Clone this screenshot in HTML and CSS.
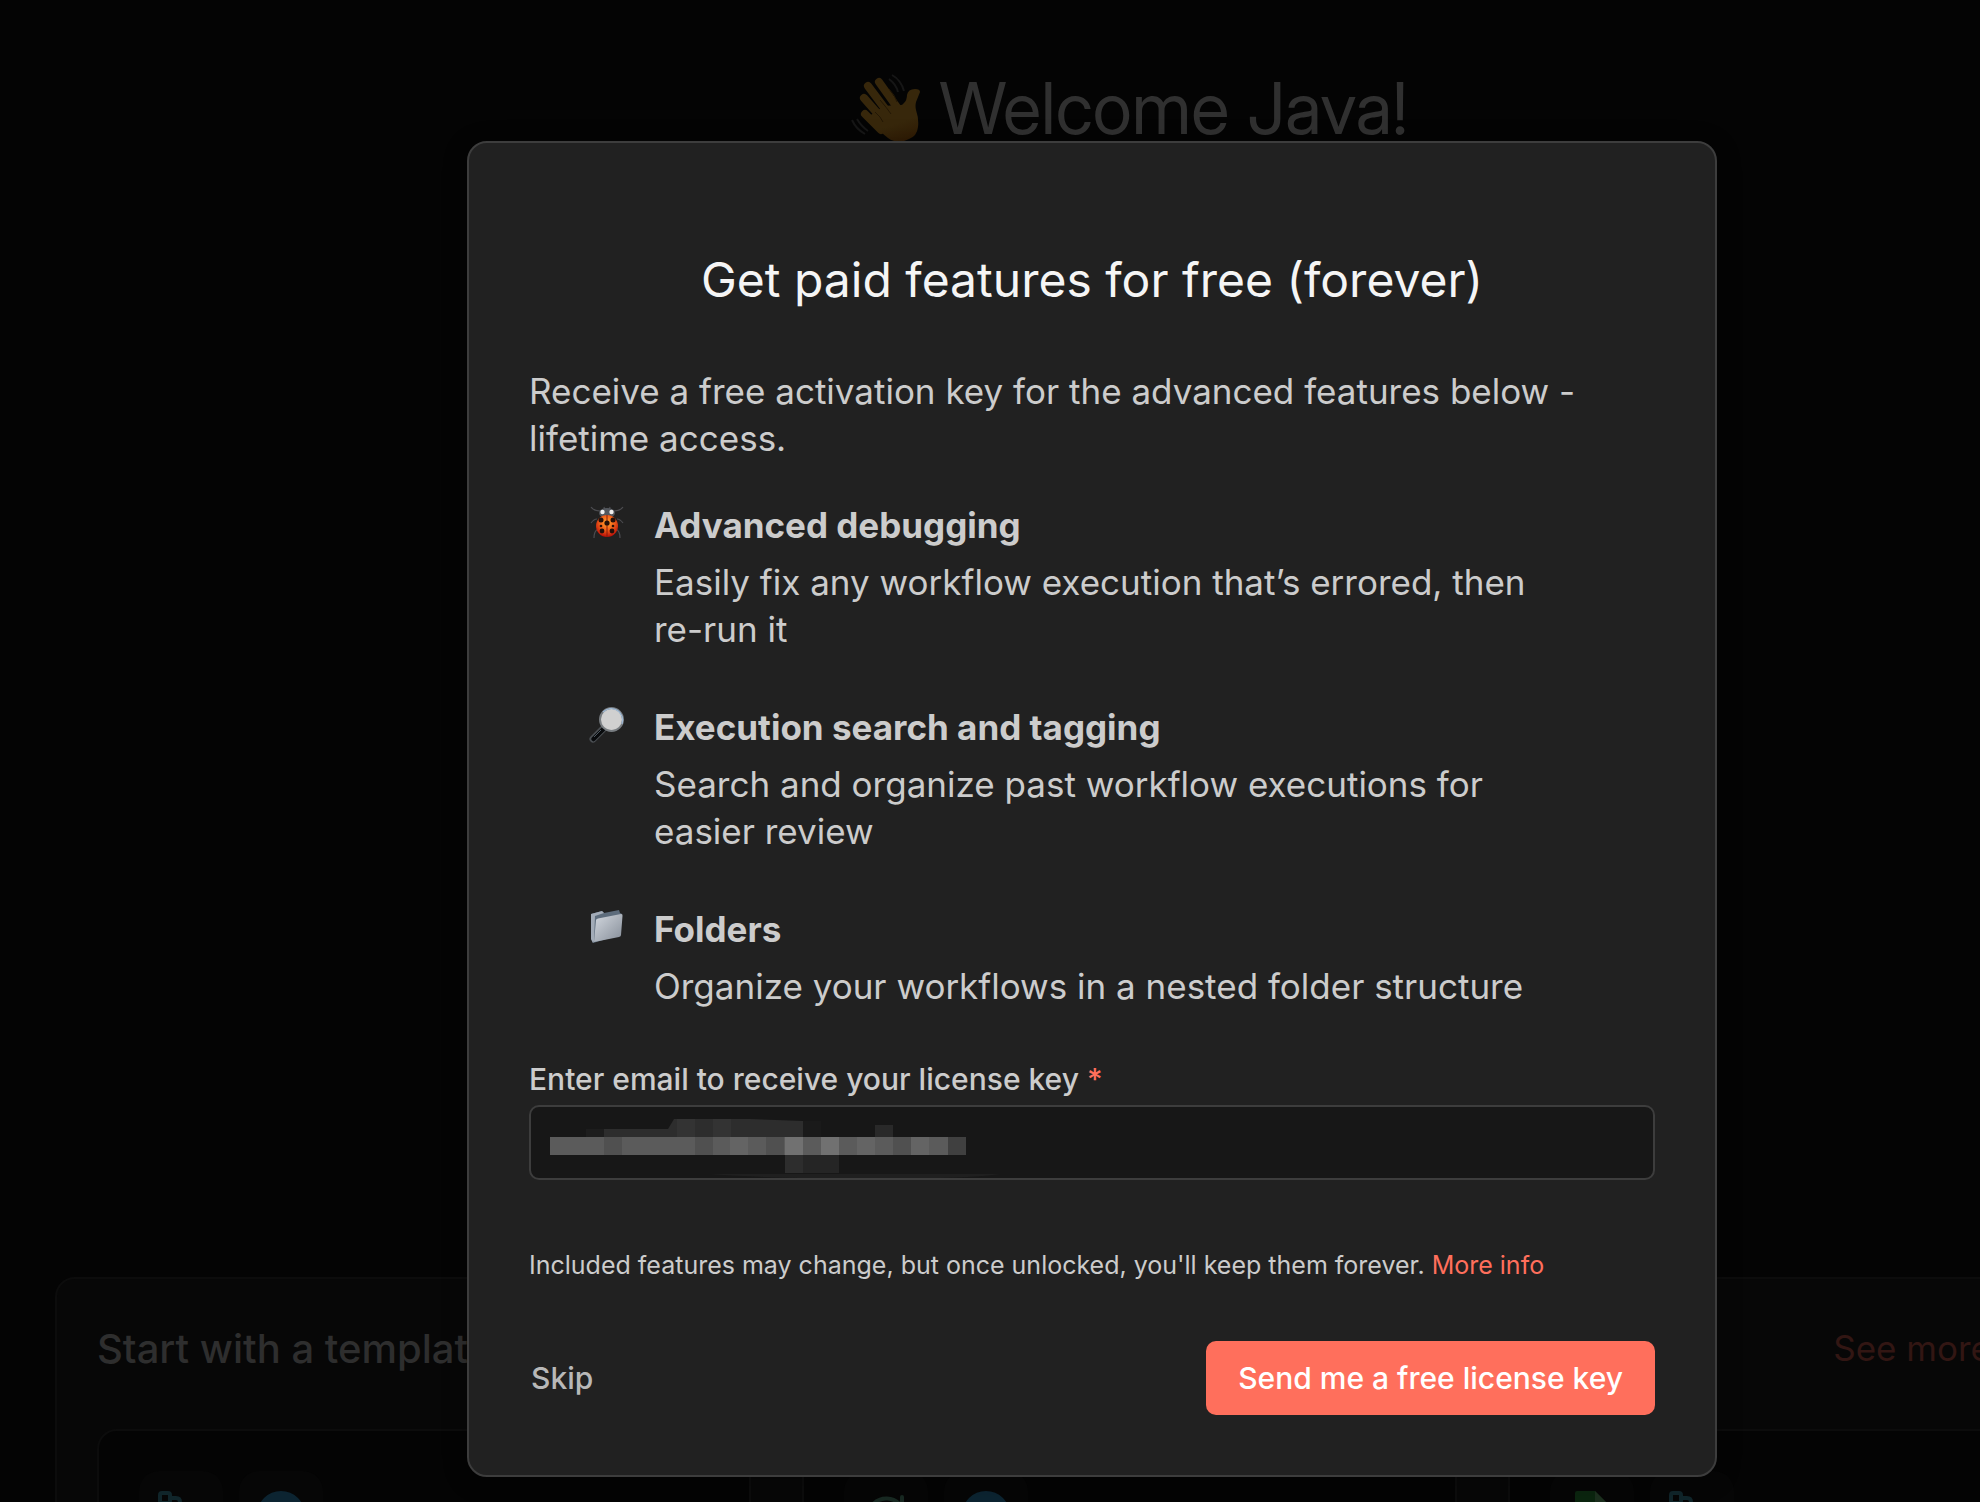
FILE: index.html
```html
<!DOCTYPE html>
<html lang="en">
<head>
<meta charset="utf-8">
<meta name="viewport" content="width=device-width, initial-scale=1">
<title>Get paid features for free</title>
<link rel="stylesheet" href="styles.css">
</head>
<body>
<svg class="defs" aria-hidden="true">
  <defs>
    <symbol id="nodes" viewBox="0 0 48 48">
      <g fill="none" stroke="#10252a" stroke-width="4">
        <rect x="3" y="2" width="10" height="10" rx="2"/>
        <path d="M13 7h6q4 0 4 4v26q0 4-4 4h-6M23 24h12"/>
        <rect x="3" y="36" width="10" height="10" rx="2"/>
        <rect x="35" y="19" width="10" height="10" rx="2"/>
      </g>
    </symbol>
    <symbol id="disc" viewBox="0 0 48 48">
      <circle cx="24" cy="24" r="24" fill="#0c2431"/>
    </symbol>
    <symbol id="refresh" viewBox="0 0 48 48">
      <path d="M39 15A18 18 0 1 0 42 29M40 6v11H29" fill="none" stroke="#182922" stroke-width="4" stroke-linecap="round"/>
    </symbol>
    <symbol id="sheet" viewBox="0 0 48 48">
      <path d="M7 2q0-2 2-2h18l14 14v32q0 2-2 2H9q-2 0-2-2z" fill="#0b250f"/>
      <path d="M27 0l14 14H27z" fill="#1c2f1e"/>
    </symbol>
  </defs>
</svg>

<main class="page">
  <h1 class="welcome">
    <svg class="wave" viewBox="10 10 72 72" aria-hidden="true">
      <defs>
        <linearGradient id="skin" gradientUnits="userSpaceOnUse" x1="40" y1="20" x2="60" y2="80">
          <stop offset="0" stop-color="#37270b"/>
          <stop offset="0.7" stop-color="#37270b"/>
          <stop offset="1" stop-color="#2f1b04"/>
        </linearGradient>
      </defs>
      <g stroke="url(#skin)" stroke-width="8" stroke-linecap="round">
        <path d="M38 20l20 28M27 24l24 32M23 36l22 25M24 52l16 16"/>
      </g>
      <path d="M43 44l14-1q4 1 6-2 3-3 3-8 1-6 8-6 5 0 5 3l-4 10q-1 4 0 8 3 9 2 17-1 9-9 12-11 6-21-1L24 57z" fill="url(#skin)"/>
      <path d="M48 27q6 6 8 13M39 38q7 8 11 14M34 50q6 5 8 10" fill="none" stroke="#231705"/>
      <path d="M51 13q9 5 12 16M48 17q7 5 9 13M16 57q4 7 11 12M11 58q4 9 13 14" fill="none" stroke="#161616" stroke-width="2"/>
    </svg>
    Welcome Java!
  </h1>
  <section class="templates">
    <header class="templates-head">
      <h2>Start with a template</h2>
      <a href="#">See more</a>
    </header>
    <div class="cards">
      <article class="card">
        <span class="tile"><svg><use href="#nodes"/></svg></span>
        <span class="tile"><svg><use href="#disc"/></svg></span>
      </article>
      <article class="card">
        <span class="tile"><svg><use href="#refresh"/></svg></span>
        <span class="tile"><svg><use href="#disc"/></svg></span>
      </article>
      <article class="card">
        <span class="tile"><svg><use href="#sheet"/></svg></span>
        <span class="tile"><svg><use href="#nodes"/></svg></span>
      </article>
    </div>
  </section>
</main>

<div class="overlay">
  <form class="modal" role="dialog" aria-labelledby="dialog-title">
    <h2 class="title" id="dialog-title">Get paid features for free (forever)</h2>
    <p class="intro">Receive a free activation key for the advanced features below - lifetime access.</p>
    <ul class="features">
      <li>
        <svg class="emoji" viewBox="0 0 36 36" aria-hidden="true">
          <defs>
            <radialGradient id="shell" cx="0.5" cy="0.35" r="0.65">
              <stop offset="0" stop-color="#ffa62b"/>
              <stop offset="0.5" stop-color="#f0601a"/>
              <stop offset="1" stop-color="#b80d08"/>
            </radialGradient>
          </defs>
          <path d="M2 2q3 4 9 4M34 2q-3 4-9 4M2 18q3-4 6-4M34 18q-3-4-6-4M5 33q0-7 4-9M31 33q0-7-4-9M15 2l1 4M21 2l-1 4" fill="none" stroke="#4c4c50" stroke-width="1.2"/>
          <ellipse cx="18" cy="8" rx="8" ry="5" fill="#53575d"/>
          <circle cx="13.500" cy="7" r="2.200" fill="#eee"/><circle cx="22.500" cy="7" r="2.200" fill="#eee"/>
          <ellipse cx="18" cy="21" rx="11" ry="11" fill="url(#shell)"/>
          <path d="M18 10v22" stroke="#8a1a08"/>
          <g fill="#24100a"><circle cx="18" cy="18" r="2.600"/><circle cx="12" cy="15" r="2.500"/><circle cx="24" cy="15" r="2.500"/><circle cx="12" cy="21" r="1.300"/><circle cx="24" cy="21" r="1.300"/><circle cx="13" cy="26" r="2.400"/><circle cx="23" cy="26" r="2.400"/></g>
        </svg>
        <div>
          <h3>Advanced debugging</h3>
          <p>Easily fix any workflow execution that’s errored, then re-run it</p>
        </div>
      </li>
      <li>
        <svg class="emoji" viewBox="0 0 36 36" aria-hidden="true">
          <path d="M15 21L4 32" stroke="#4a4e52" stroke-width="7" stroke-linecap="round"/>
          <path d="M14 22.500L4.500 32" stroke="#080a0c" stroke-width="4.500" stroke-linecap="round"/>
          <path d="M12 23L5 30" stroke="#4c5760" stroke-width="1"/>
          <circle cx="22.500" cy="12.500" r="11.500" fill="#c9c9c9" stroke="#777c80" stroke-width="2"/>
          <path d="M14 5a11.500 11.500 0 0 1 19 12" fill="none" stroke="#9fb9d4" stroke-width="1.300"/>
          <circle cx="22.500" cy="12.500" r="10" fill="#d0d0d0"/>
        </svg>
        <div>
          <h3>Execution search and tagging</h3>
          <p>Search and organize past workflow executions for easier review</p>
        </div>
      </li>
      <li>
        <svg class="emoji" viewBox="0 0 36 36" aria-hidden="true">
          <defs>
            <linearGradient id="folder" x1="0" y1="0" x2="1" y2="1">
              <stop offset="0" stop-color="#d3d8df"/>
              <stop offset="1" stop-color="#858d98"/>
            </linearGradient>
          </defs>
          <path d="M2 5l11-3 2 2 15-3 1 3 2 1-2 21L4 34 2 30z" fill="#5d6c7c"/>
          <path d="M2 5l11-3 2 2-9 3-1 25-1 2-2-4z" fill="#a2abb7"/>
          <path d="M7 11q0-1 2-1.500L32 5q2 0 1.500 2L32 26q0 1.500-2 2L5 33z" fill="url(#folder)"/>
        </svg>
        <div>
          <h3>Folders</h3>
          <p>Organize your workflows in a nested folder structure</p>
        </div>
      </li>
    </ul>
    <label class="label" for="email">Enter email to receive your license key <span class="star">*</span></label>
    <div class="field">
      <input id="email" type="email" required>
      <svg class="redacted" viewBox="0 0 480 75" aria-hidden="true">
        <g fill="#2d2d2d">
          <path d="M36 24h18v9H36z" fill="#1d1d1d"/>
          <path d="M54 24h64l6-10h75l54 2v17H54z"/>
          <path d="M163 14h18v19h-18zM127 14h18v19h-18z" fill="#333"/>
          <path d="M253 16h18v17h-18z" fill="#1a1a1a"/>
          <path d="M325 20h18v13h-18z" fill="#292929"/>
          <path d="M235 50h18v18h-18z"/>
          <path d="M253 50h36v18h-36z" fill="#252525"/>
        </g>
        <path d="M0 32h416v18H0z" fill="#5b5b5b"/>
        <path d="M54 32h18v18H54zM145 32h18v18h-18zM216 32h18v18h-18zM343 32h18v18h-18z" fill="#505050"/>
        <path d="M180 32h18v18h-18zM307 32h18v18h-18zM361 32h18v18h-18z" fill="#646464"/>
        <path d="M235 32h18v18h-18zM271 32h18v18h-18z" fill="#717171"/>
        <path d="M398 32h18v18h-18z" fill="#404040"/>
        <path d="M160 69h290q-20 3-60 4H250q-50-1-90-4z" fill="#1f1f1f"/>
      </svg>
    </div>
    <p class="note">Included features may change, but once unlocked, you'll keep them forever. <a href="#">More info</a></p>
    <div class="actions">
      <button class="skip" type="button">Skip</button>
      <button class="send" type="submit">Send me a free license key</button>
    </div>
  </form>
</div>
</body>
</html>
```
FILE: styles.css
```css
* {
  box-sizing: border-box;
  margin: 0;
  padding: 0;
}

body {
  background: #040404;
  color: #cccccc;
  font-family: Inter, sans-serif;
  font-size: 35px;
  line-height: 47px;
}

a {
  color: #ff6f5c;
  text-decoration: none;
}

.defs {
  display: block;
  width: 0;
  height: 0;
}

/* The workspace runs wider than the window, past its right edge. */
.page {
  display: flex;
  flex-direction: column;
  justify-content: space-between;
  height: 100vh;
  overflow: hidden;
  padding: 66px 0 0 55px;
}

.welcome {
  display: flex;
  align-items: center;
  justify-content: center;
  gap: 16px;
  margin-right: -224px;
  color: #303030;
  font-family: "Inter Display", Inter, sans-serif;
  font-size: 71px;
  font-weight: 400;
  line-height: 84px;
}

.wave {
  width: 72px;
  height: 72px;
}

.templates {
  height: 266px;
  margin: 0 -224px -41px 0;
  padding: 40px 40px 0;
  border: 2px solid #0c0c0c;
  border-radius: 20px;
  background: #070707;
}

.templates-head {
  display: flex;
  align-items: center;
  justify-content: space-between;
  height: 58px;
  margin-bottom: 52px;
  padding-right: 171px;
}

.templates-head h2 {
  color: #2e2e2e;
  font-size: 40px;
  font-weight: 500;
}

.templates-head a {
  color: #321613;
}

.cards {
  display: grid;
  grid-template-columns: repeat(3, 1fr);
  gap: 51px;
}

.card {
  display: flex;
  gap: 16px;
  height: 300px;
  padding: 40px;
  border: 2px solid #0c0c0c;
  border-radius: 20px;
  background: #040404;
}

.tile {
  display: flex;
  justify-content: center;
  width: 84px;
  height: 84px;
  padding-top: 20px;
  border-radius: 20px;
  background: #060606;
}

.tile svg {
  width: 48px;
  height: 48px;
}

.overlay {
  position: absolute;
  inset: 0;
  display: flex;
  align-items: flex-start;
  justify-content: center;
  padding: 141px 0 0 204px;
}

.modal {
  width: 1250px;
  padding: 107px 60px 60px;
  border: 2px solid #3d3d3d;
  border-radius: 20px;
  background: #212121;
  box-shadow: 0 4px 24px #00000040;
}

.title {
  margin-bottom: 58px;
  color: #f5f5f5;
  font-size: 48px;
  font-weight: 400;
  line-height: 60px;
  text-align: center;
}

.intro {
  margin-bottom: 40px;
}

.features {
  display: flex;
  flex-direction: column;
  gap: 51px;
  padding: 0 100px 0 60px;
  list-style: none;
}

.features li {
  display: flex;
  gap: 29px;
}

.features h3 {
  margin-bottom: 10px;
  font-size: 35px;
  font-weight: 700;
}

.emoji {
  flex: none;
  width: 36px;
  height: 36px;
  margin-top: 3px;
}

.label {
  display: block;
  margin: 49px 0 6px;
  font-size: 30px;
  font-weight: 500;
  line-height: 40px;
}

.star {
  color: #ff6f5c;
}

.field {
  position: relative;
}

.field input {
  display: block;
  width: 100%;
  height: 75px;
  padding: 0 20px;
  border: 2px solid #3d3d3d;
  border-radius: 10px;
  background: #171717;
  color: #cccccc;
  font: inherit;
  font-size: 30px;
}

.redacted {
  position: absolute;
  top: 0;
  left: 21px;
  width: 480px;
  height: 75px;
}

.note {
  margin: 65px 0 56px;
  font-size: 25px;
  line-height: 40px;
}

.actions {
  display: flex;
  align-items: center;
  justify-content: space-between;
}

.actions button {
  height: 74px;
  border: 0;
  border-radius: 10px;
  background: none;
  font-family: inherit;
  font-size: 30px;
  font-weight: 500;
}

.actions .skip {
  padding: 0 2px;
  color: #b8b8b8;
}

.actions .send {
  padding: 0 32px;
  background: #ff6f5c;
  color: #ffffff;
}
```
